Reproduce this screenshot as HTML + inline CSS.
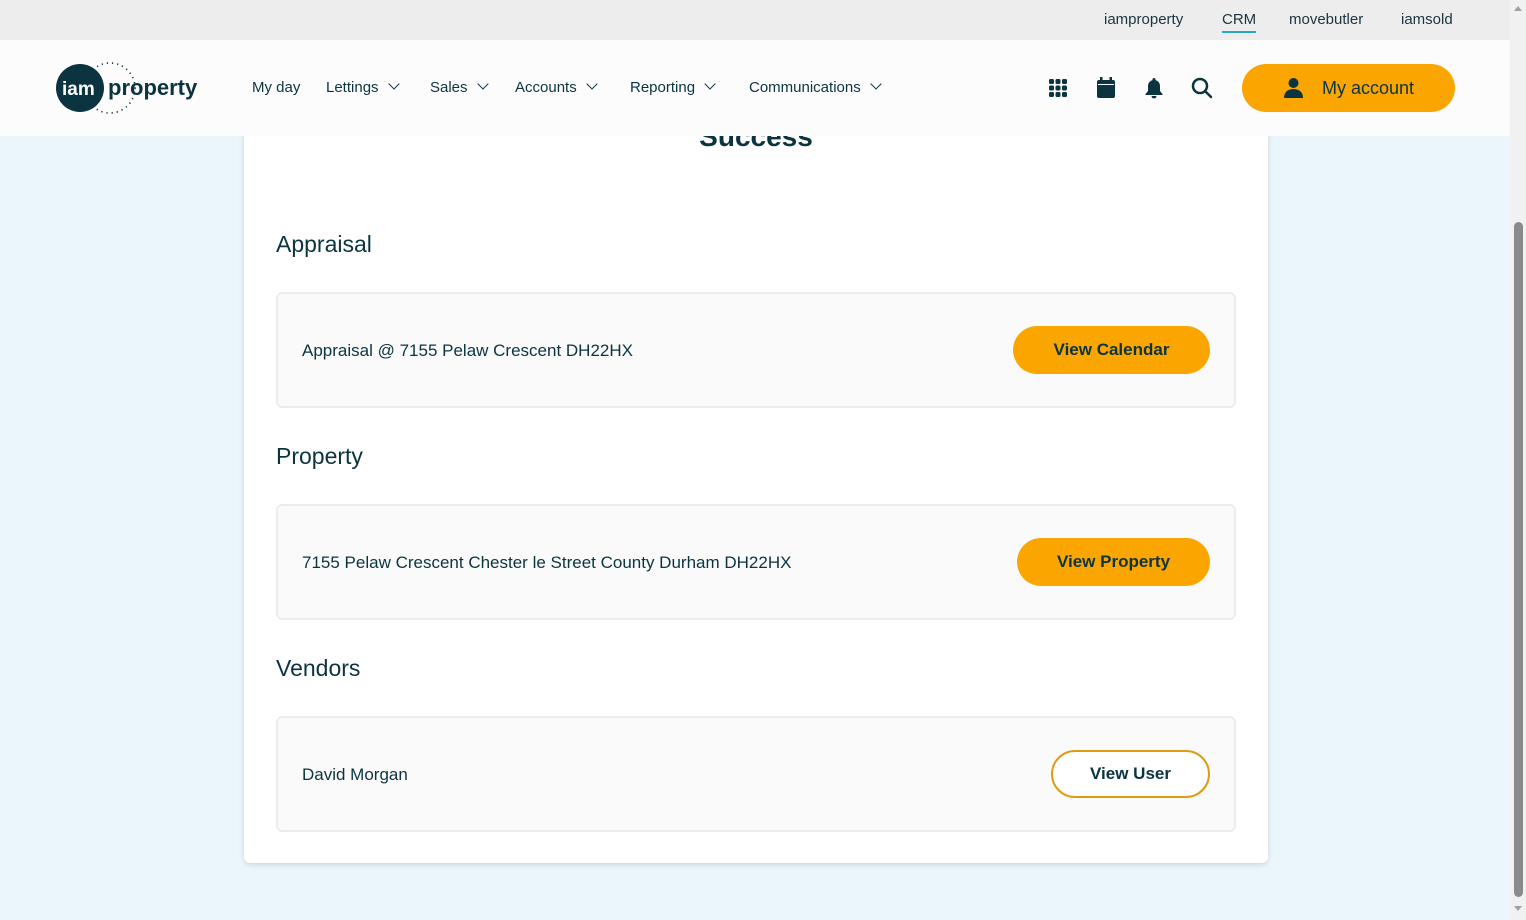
<!DOCTYPE html>
<html><head><style>
*{box-sizing:border-box;margin:0;padding:0}
body{width:1526px;height:920px;overflow:hidden;background:#eaf6fb;font-family:"Liberation Sans",sans-serif;color:#0b3440;position:relative}
.top{position:absolute;left:0;top:0;width:1510px;height:40px;background:#ededed;font-size:15px;color:#1a3540}
.top span{position:absolute;top:11px}
.hdr{position:absolute;left:0;top:40px;width:1510px;height:96px;background:#fcfcfc;z-index:2}
.nav{position:absolute;top:39px;font-size:15px;color:#0b3440}
.chev{display:inline-block;width:8px;height:8px;border-right:1.5px solid #0b3440;border-bottom:1.5px solid #0b3440;transform:rotate(45deg);margin-left:11px;position:relative;top:-4px}
.acct{position:absolute;left:1242px;top:24px;width:213px;height:48px;border-radius:24px;background:#fba600;font-size:18px;color:#0b3440}
.card{position:absolute;left:244px;top:100px;width:1024px;height:763px;background:#fff;border-radius:6px;box-shadow:0 2px 6px rgba(0,0,0,.12)}
h1{position:absolute;left:0;width:100%;text-align:center;top:21px;font-size:28px;font-weight:bold}
h2{position:absolute;left:32px;font-size:23px;font-weight:normal}
.box{position:absolute;left:32px;width:960px;height:116px;background:#fafafa;border:2px solid #ececec;border-radius:6px}
.box .t{position:absolute;left:24px;top:47px;font-size:17px}
.btn{position:absolute;right:24px;top:32px;height:48px;border-radius:24px;background:#fba600;font-size:17px;font-weight:bold;text-align:center;line-height:48px}
.sb{position:absolute;left:1510px;top:0;width:16px;height:920px;background:#f1f1f1}
</style></head><body>
<div class="top">
<span style="left:1104px">iamproperty</span>
<span style="left:1222px">CRM<div style="height:2px;background:#27a8c6;margin-top:3px"></div></span>
<span style="left:1289px">movebutler</span>
<span style="left:1401px">iamsold</span>
</div>
<div class="hdr">
<svg style="position:absolute;left:54px;top:22px" width="90" height="52" viewBox="0 0 90 52">
<circle cx="26" cy="26" r="24" fill="#0b3440"/>
<circle cx="56" cy="26" r="25" fill="none" stroke="#0b3440" stroke-width="1.6" stroke-dasharray="1.2 4"/>
<text x="8" y="33" font-family="Liberation Sans" font-weight="bold" font-size="19" fill="#fff">iam</text>
</svg>
<div style="position:absolute;left:108px;top:35px;font-size:22px;font-weight:bold;color:#0b3440">property</div>
<div class="nav" style="left:252px">My day</div>
<div class="nav" style="left:326px">Lettings<span class="chev"></span></div>
<div class="nav" style="left:430px">Sales<span class="chev"></span></div>
<div class="nav" style="left:515px">Accounts<span class="chev"></span></div>
<div class="nav" style="left:630px">Reporting<span class="chev"></span></div>
<div class="nav" style="left:749px">Communications<span class="chev"></span></div>
<svg style="position:absolute;left:1049px;top:39px" width="18" height="18" viewBox="0 0 18 18" fill="#0b3440">
<rect x="0" y="0" width="5" height="5" rx="1.5"/><rect x="6.5" y="0" width="5" height="5" rx="1.5"/><rect x="13" y="0" width="5" height="5" rx="1.5"/>
<rect x="0" y="6.5" width="5" height="5" rx="1.5"/><rect x="6.5" y="6.5" width="5" height="5" rx="1.5"/><rect x="13" y="6.5" width="5" height="5" rx="1.5"/>
<rect x="0" y="13" width="5" height="5" rx="1.5"/><rect x="6.5" y="13" width="5" height="5" rx="1.5"/><rect x="13" y="13" width="5" height="5" rx="1.5"/></svg>
<svg style="position:absolute;left:1097px;top:37px" width="18" height="21" viewBox="0 0 18 21" fill="#0b3440">
<rect x="0" y="3" width="18" height="18" rx="2"/><rect x="3" y="0" width="2.5" height="5"/><rect x="12.5" y="0" width="2.5" height="5"/><rect x="1" y="7" width="16" height="1" fill="#fff"/></svg>
<svg style="position:absolute;left:1144px;top:37px" width="20" height="22" viewBox="0 0 20 22" fill="#0b3440">
<path d="M10 1a1.5 1.5 0 0 1 1.5 1.5v.6A6 6 0 0 1 16 9v5l2.5 3v1H1.5v-1L4 14V9a6 6 0 0 1 4.5-5.9v-.6A1.5 1.5 0 0 1 10 1z"/><path d="M7.5 19h5a2.5 2.5 0 0 1-5 0z"/></svg>
<svg style="position:absolute;left:1191px;top:37px" width="22" height="22" viewBox="0 0 22 22" fill="none" stroke="#0b3440" stroke-width="2.5">
<circle cx="9" cy="9" r="7"/><path d="M14 14l6 6" stroke-linecap="round"/></svg>
<div class="acct">
<svg style="position:absolute;left:42px;top:14px" width="19" height="20" viewBox="0 0 19 20" fill="#0b3440"><circle cx="9.5" cy="5" r="5"/><path d="M0 20c0-6 4-9 9.5-9s9.5 3 9.5 9z"/></svg>
<span style="position:absolute;left:80px;top:14px">My account</span></div>
</div>
<div class="card">
<h1>Success</h1>
<h2 style="top:131px">Appraisal</h2>
<div class="box" style="top:192px"><div class="t">Appraisal @ 7155 Pelaw Crescent DH22HX</div><div class="btn" style="width:197px">View Calendar</div></div>
<h2 style="top:343px">Property</h2>
<div class="box" style="top:404px"><div class="t">7155 Pelaw Crescent Chester le Street County Durham DH22HX</div><div class="btn" style="width:193px">View Property</div></div>
<h2 style="top:555px">Vendors</h2>
<div class="box" style="top:616px"><div class="t">David Morgan</div><div class="btn" style="width:159px;background:#fff;border:2px solid #e09b10;line-height:44px">View User</div></div>
</div>
<div class="sb">
<div style="position:absolute;left:4px;top:6px;border:4px solid transparent;border-bottom:5px solid #a0a0a0;border-top:0"></div>
<div style="position:absolute;left:4px;top:222px;width:9px;height:675px;border-radius:5px;background:#8a8a8a"></div>
<div style="position:absolute;left:4px;top:906px;border:4px solid transparent;border-top:5px solid #a0a0a0;border-bottom:0"></div>
</div>
</body></html>
